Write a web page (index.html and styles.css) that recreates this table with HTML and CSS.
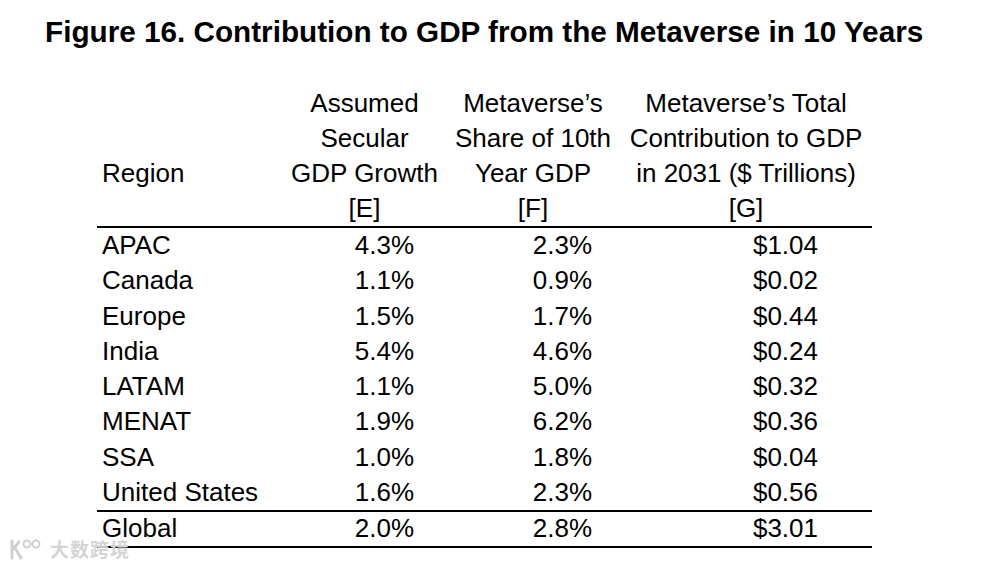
FILE: index.html
```html
<!DOCTYPE html>
<html>
<head>
<meta charset="utf-8">
<link rel="stylesheet" href="styles.css">
</head>
<body>
<div class="page">
  <h1 class="title">Figure 16. Contribution to GDP from the Metaverse in 10 Years</h1>
  <div class="table">
    <div class="head">
      <div class="hcell region-h"><span>Region</span></div>
      <div class="hcell"><span>Assumed</span><span>Secular</span><span>GDP Growth</span><span>[E]</span></div>
      <div class="hcell"><span>Metaverse’s</span><span>Share of 10th</span><span>Year GDP</span><span>[F]</span></div>
      <div class="hcell"><span>Metaverse’s Total</span><span>Contribution to GDP</span><span>in 2031 ($ Trillions)</span><span>[G]</span></div>
    </div>
    <div class="body">
      <div class="row"><div class="c r">APAC</div><div class="c e">4.3%</div><div class="c f">2.3%</div><div class="c g">$1.04</div></div>
      <div class="row"><div class="c r">Canada</div><div class="c e">1.1%</div><div class="c f">0.9%</div><div class="c g">$0.02</div></div>
      <div class="row"><div class="c r">Europe</div><div class="c e">1.5%</div><div class="c f">1.7%</div><div class="c g">$0.44</div></div>
      <div class="row"><div class="c r">India</div><div class="c e">5.4%</div><div class="c f">4.6%</div><div class="c g">$0.24</div></div>
      <div class="row"><div class="c r">LATAM</div><div class="c e">1.1%</div><div class="c f">5.0%</div><div class="c g">$0.32</div></div>
      <div class="row"><div class="c r">MENAT</div><div class="c e">1.9%</div><div class="c f">6.2%</div><div class="c g">$0.36</div></div>
      <div class="row"><div class="c r">SSA</div><div class="c e">1.0%</div><div class="c f">1.8%</div><div class="c g">$0.04</div></div>
      <div class="row"><div class="c r">United States</div><div class="c e">1.6%</div><div class="c f">2.3%</div><div class="c g">$0.56</div></div>
    </div>
    <div class="row total"><div class="c r">Global</div><div class="c e">2.0%</div><div class="c f">2.8%</div><div class="c g">$3.01</div></div>
  </div>
  <div class="watermark">
    <svg class="wm-logo" width="40" height="22" viewBox="0 0 40 22">
      <path d="M4 3 L4 20 M4 12 L11 4 M7 10 L13 20" fill="none" stroke="#d0d0d0" stroke-width="3" stroke-linecap="round"/>
      <circle cx="19" cy="6" r="3.5" fill="none" stroke="#d0d0d0" stroke-width="2"/>
      <circle cx="28" cy="6" r="3.5" fill="none" stroke="#d0d0d0" stroke-width="2"/>
    </svg>
    <span class="wm-text">大数跨境</span>
  </div>
</div>
</body>
</html>
```

FILE: styles.css
```css
html, body {
  margin: 0;
  padding: 0;
  background: #ffffff;
}

.page {
  position: relative;
  width: 1000px;
  height: 568px;
  font-family: "Liberation Sans", Arial, sans-serif;
  color: #000;
}

.title {
  margin: 0;
  padding: 15px 0 0 45px;
  font-size: 29.7px;
  line-height: 34px;
  font-weight: bold;
  white-space: nowrap;
}

.table {
  margin: 37px 0 0 97px;
  width: 775px;
  font-size: 26px;
}

.head {
  display: grid;
  grid-template-columns: 186px 163px 174px 252px;
  border-bottom: 2px solid #000;
}

.hcell {
  display: flex;
  flex-direction: column;
  align-items: center;
  justify-content: flex-end;
  line-height: 35px;
  white-space: nowrap;
}

.hcell.region-h {
  align-items: flex-start;
  padding-left: 5px;
  padding-bottom: 35px;
}

.row {
  display: grid;
  grid-template-columns: 186px 163px 174px 252px;
  line-height: 35.25px;
  white-space: nowrap;
}

.body {
  border-bottom: 2px solid #000;
}

.total {
  line-height: 33.5px;
  border-bottom: 2px solid #000;
}

.c.r {
  padding-left: 5px;
}

.c.e {
  text-align: right;
  padding-right: 32px;
}

.c.f {
  text-align: right;
  padding-right: 28px;
}

.c.g {
  text-align: right;
  padding-right: 54px;
}

.watermark {
  position: absolute;
  left: 8px;
  top: 538px;
  display: flex;
  align-items: center;
  gap: 2px;
}

.wm-text {
  font-family: "Noto Sans CJK SC", sans-serif;
  font-size: 19px;
  font-weight: bold;
  color: #d4d4d4;
  letter-spacing: 1px;
  line-height: 20px;
}
```
